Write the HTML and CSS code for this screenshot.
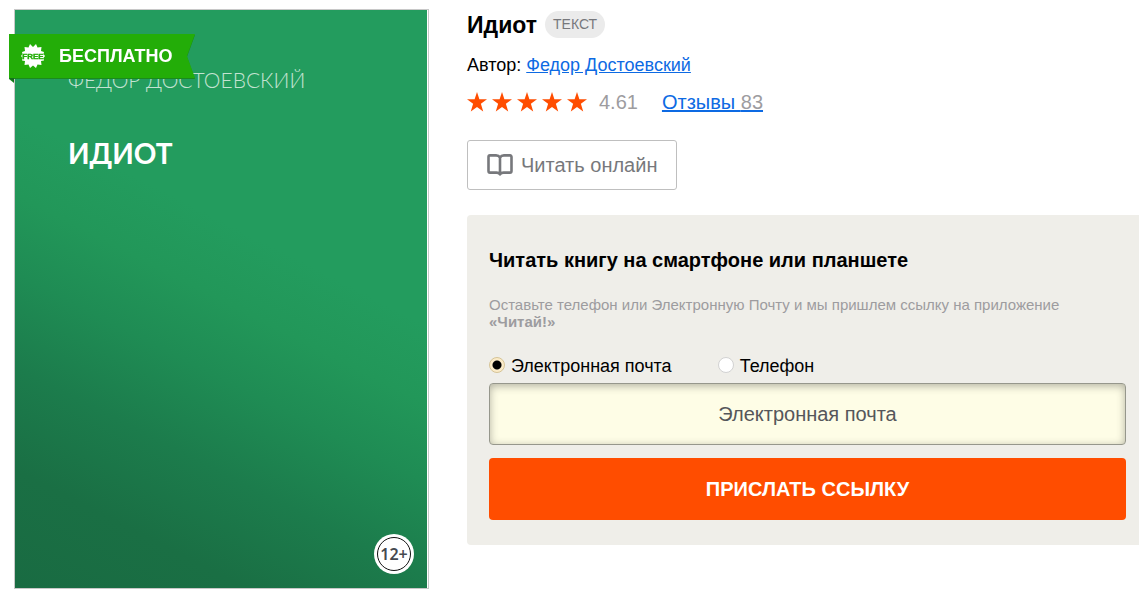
FILE: index.html
```html
<!DOCTYPE html>
<html lang="ru">

<head>
    <meta charset="UTF-8">
    <title>Идиот</title>
    <link rel="stylesheet" href="styles.css">
</head>

<body>

    <div class="book">
        <!-- Cover -->
        <div class="cover">
            <div class="cover-art">
                <p class="cover-author">ФЕДОР ДОСТОЕВСКИЙ</p>
                <p class="cover-title">ИДИОТ</p>
            </div>
            <div class="ribbon">
                <div class="ribbon-body">
                    <svg class="ribbon-icon" viewBox="0 0 24 24" width="24" height="24">
                        <path fill="#fff" d="M12 3 L15 0 L16.500 3.500 L20.500 3 L20 7 L23 8 L22.500 10 L24 12 L22.500 14 L23 16.500 L20 17 L20.500 21 L16.500 20.500 L15 24 L12 21.500 L9 24 L7.500 20.500 L3.500 21 L4 17 L1 16.500 L1.500 14 L0 12 L1.500 10 L1 8 L4 7 L3.500 3 L7.500 3.500 L9 0 Z" />
                        <text x="12" y="15" text-anchor="middle">FREE</text>
                    </svg>
                    <span>БЕСПЛАТНО</span>
                </div>
                <div class="ribbon-fold"></div>
            </div>
            <div class="age"><span>12+</span></div>
        </div>

        <!-- Book info -->
        <div class="info">
            <div class="title-row">
                <h1>Идиот</h1>
                <span class="type">ТЕКСТ</span>
            </div>
            <p class="author">Автор: <a href="#">Федор Достоевский</a></p>
            <div class="rating">
                <div class="stars">
                    <svg viewBox="0 0 20 20"><path d="M10 0 L12.400 7.200 H20 L13.900 11.800 L16.200 19.500 L10 15 L3.800 19.500 L6.100 11.800 L0 7.200 H7.600 Z" /></svg>
                    <svg viewBox="0 0 20 20"><path d="M10 0 L12.400 7.200 H20 L13.900 11.800 L16.200 19.500 L10 15 L3.800 19.500 L6.100 11.800 L0 7.200 H7.600 Z" /></svg>
                    <svg viewBox="0 0 20 20"><path d="M10 0 L12.400 7.200 H20 L13.900 11.800 L16.200 19.500 L10 15 L3.800 19.500 L6.100 11.800 L0 7.200 H7.600 Z" /></svg>
                    <svg viewBox="0 0 20 20"><path d="M10 0 L12.400 7.200 H20 L13.900 11.800 L16.200 19.500 L10 15 L3.800 19.500 L6.100 11.800 L0 7.200 H7.600 Z" /></svg>
                    <svg viewBox="0 0 20 20"><path d="M10 0 L12.400 7.200 H20 L13.900 11.800 L16.200 19.500 L10 15 L3.800 19.500 L6.100 11.800 L0 7.200 H7.600 Z" /></svg>
                </div>
                <span class="score">4.61</span>
                <a class="reviews" href="#">Отзывы <span>83</span></a>
            </div>
            <button class="read" type="button">
                <svg viewBox="0 0 26 22" width="26" height="22">
                    <path d="M13 3.500 C12 1.800 10.500 1.400 9 1.400 H3 Q1.500 1.400 1.500 3 V17 Q1.500 18.600 3 18.600 H9.500 Q12 18.600 13 20.300 Q14 18.600 16.500 18.600 H23 Q24.500 18.600 24.500 17 V3 Q24.500 1.400 23 1.400 H17 C15.500 1.400 14 1.800 13 3.500 Z M13 3.500 V20.300" />
                </svg>
                Читать онлайн
            </button>

            <!-- Send link form -->
            <form class="send">
                <h2>Читать книгу на смартфоне или планшете</h2>
                <p class="note">Оставьте телефон или Электронную Почту и мы пришлем ссылку на приложение <b>«Читай!»</b></p>
                <div class="options">
                    <label><input type="radio" name="way" checked>Электронная почта</label>
                    <label><input type="radio" name="way">Телефон</label>
                </div>
                <input class="field" type="text" placeholder="Электронная почта" aria-label="Электронная почта">
                <button class="submit" type="button">ПРИСЛАТЬ ССЫЛКУ</button>
            </form>
        </div>
    </div>

</body>

</html>
```
FILE: styles.css
```css
* {
    box-sizing: border-box;
}

body {
    margin: 0;
    background-color: #fff;
    color: #000;
    font-family: "Liberation Sans", Arial, sans-serif;
}

h1,
h2,
p {
    margin: 0;
}

a {
    color: #0d6ae3;
}

.book {
    display: flex;
    align-items: flex-start;
    gap: 38px;
    padding: 9px 0 9px 14px;
}

/* Cover */
.cover {
    position: relative;
    flex: 0 0 415px;
    padding-right: 1px;
    border: 1px solid #c8c8c8;
}

.cover-art {
    aspect-ratio: 412 / 578;
    padding: 56px 53px;
    color: #fff;
    font-family: Lato, sans-serif;
    background: linear-gradient(27deg, #196b42 0%, #1a6f44 15%, #1c7c4c 28%, #1f8c54 40%, #229759 50%, #239c5e 60%, #239c5e 100%);
}

.cover-author {
    font-size: 21px;
    font-weight: 300;
    line-height: 28px;
    color: #c4e3d2;
}

.cover-title {
    margin-top: 41px;
    font-size: 28px;
    font-weight: 700;
    line-height: 36px;
}

.ribbon {
    position: absolute;
    top: 24px;
    left: -6px;
    filter: drop-shadow(0 1px 0 #1b8a1d);
}

.ribbon-body {
    display: flex;
    align-items: center;
    gap: 14px;
    width: 186px;
    height: 44px;
    padding-left: 12px;
    background-color: #23ad08;
    color: #fff;
    font-size: 18px;
    font-weight: bold;
    clip-path: polygon(0 0, 100% 0, 178px 50%, 100% 100%, 0 100%);
}

.ribbon-icon text {
    font-size: 8px;
    font-weight: bold;
    fill: #23ad08;
    stroke: #23ad08;
    stroke-width: 0.4;
}

.ribbon-fold {
    position: absolute;
    top: 100%;
    left: 0;
    width: 5px;
    height: 4px;
    background-color: #14701d;
    clip-path: polygon(0 0, 100% 0, 100% 100%);
}

.age {
    position: absolute;
    right: 14px;
    bottom: 14px;
    width: 40px;
    height: 40px;
    padding: 3px;
    border-radius: 50%;
    background-color: #fff;
}

.age span {
    display: flex;
    align-items: center;
    justify-content: center;
    height: 100%;
    border: 1px solid #111;
    border-radius: 50%;
    color: #444950;
    font: 600 16px "Noto Sans", sans-serif;
}

/* Book info */
.info {
    flex: 1;
    min-width: 0;
}

.title-row {
    display: flex;
    align-items: center;
    gap: 8px;
    padding-top: 2px;
}

h1 {
    font-size: 23px;
    line-height: 26px;
}

.type {
    padding: 0 8px;
    border-radius: 14px;
    background-color: #ebebeb;
    color: #77787c;
    font-size: 14px;
    line-height: 27px;
}

.author {
    margin-top: 16px;
    font-size: 18px;
    line-height: 22px;
}

.rating {
    display: flex;
    align-items: center;
    margin-top: 14px;
    font-size: 20px;
    line-height: 24px;
}

.stars {
    display: flex;
    gap: 5px;
}

.stars svg {
    width: 20px;
    height: 20px;
    fill: #ff4d00;
}

.score {
    margin-left: 12px;
    color: #9d9c9f;
}

.reviews {
    margin-left: 24px;
}

.reviews span {
    color: #9d9c9f;
}

.read {
    display: flex;
    align-items: center;
    gap: 8px;
    height: 50px;
    margin-top: 26px;
    padding: 0 19px;
    border: 1px solid #bfbfbf;
    border-radius: 3px;
    background-color: #fff;
    color: #77787c;
    font-family: inherit;
    font-size: 20px;
}

.read svg {
    fill: none;
    stroke: #77787c;
    stroke-width: 2.6;
    stroke-linejoin: round;
}

/* Send link form */
.send {
    margin-top: 25px;
    padding: 33px 13px 25px 22px;
    border-radius: 4px 0 0 4px;
    background-color: #efeee9;
}

h2 {
    font-size: 20px;
    line-height: 24px;
}

.note {
    margin-top: 24px;
    color: #9d9c9f;
    font-size: 15px;
    line-height: 17px;
}

.options {
    display: flex;
    gap: 46px;
    margin-top: 25px;
    font-size: 18px;
    line-height: 22px;
}

.options label {
    display: flex;
    align-items: center;
    gap: 6px;
}

.options input {
    appearance: none;
    width: 16px;
    height: 16px;
    margin: 0 0 3px;
    border: 1px solid #d2d2d2;
    border-radius: 50%;
    background-color: #fff;
}

.options input:checked {
    border-color: #d6c496;
    background: radial-gradient(circle, #000 0 4px, #fbebc8 5px);
}

.field {
    display: block;
    width: 100%;
    height: 62px;
    margin-top: 6px;
    padding: 0 16px;
    border: 1px solid #96978c;
    border-radius: 4px;
    background-color: #fefde6;
    box-shadow: inset 0 2px 9px rgba(0, 0, 0, 0.3);
    font-family: inherit;
    font-size: 20px;
    text-align: center;
}

.field::placeholder {
    color: #55565a;
}

.submit {
    display: block;
    width: 100%;
    height: 62px;
    margin-top: 13px;
    border: none;
    border-radius: 4px;
    background-color: #ff4d00;
    color: #fff;
    font-family: inherit;
    font-size: 20px;
    font-weight: bold;
}
```
